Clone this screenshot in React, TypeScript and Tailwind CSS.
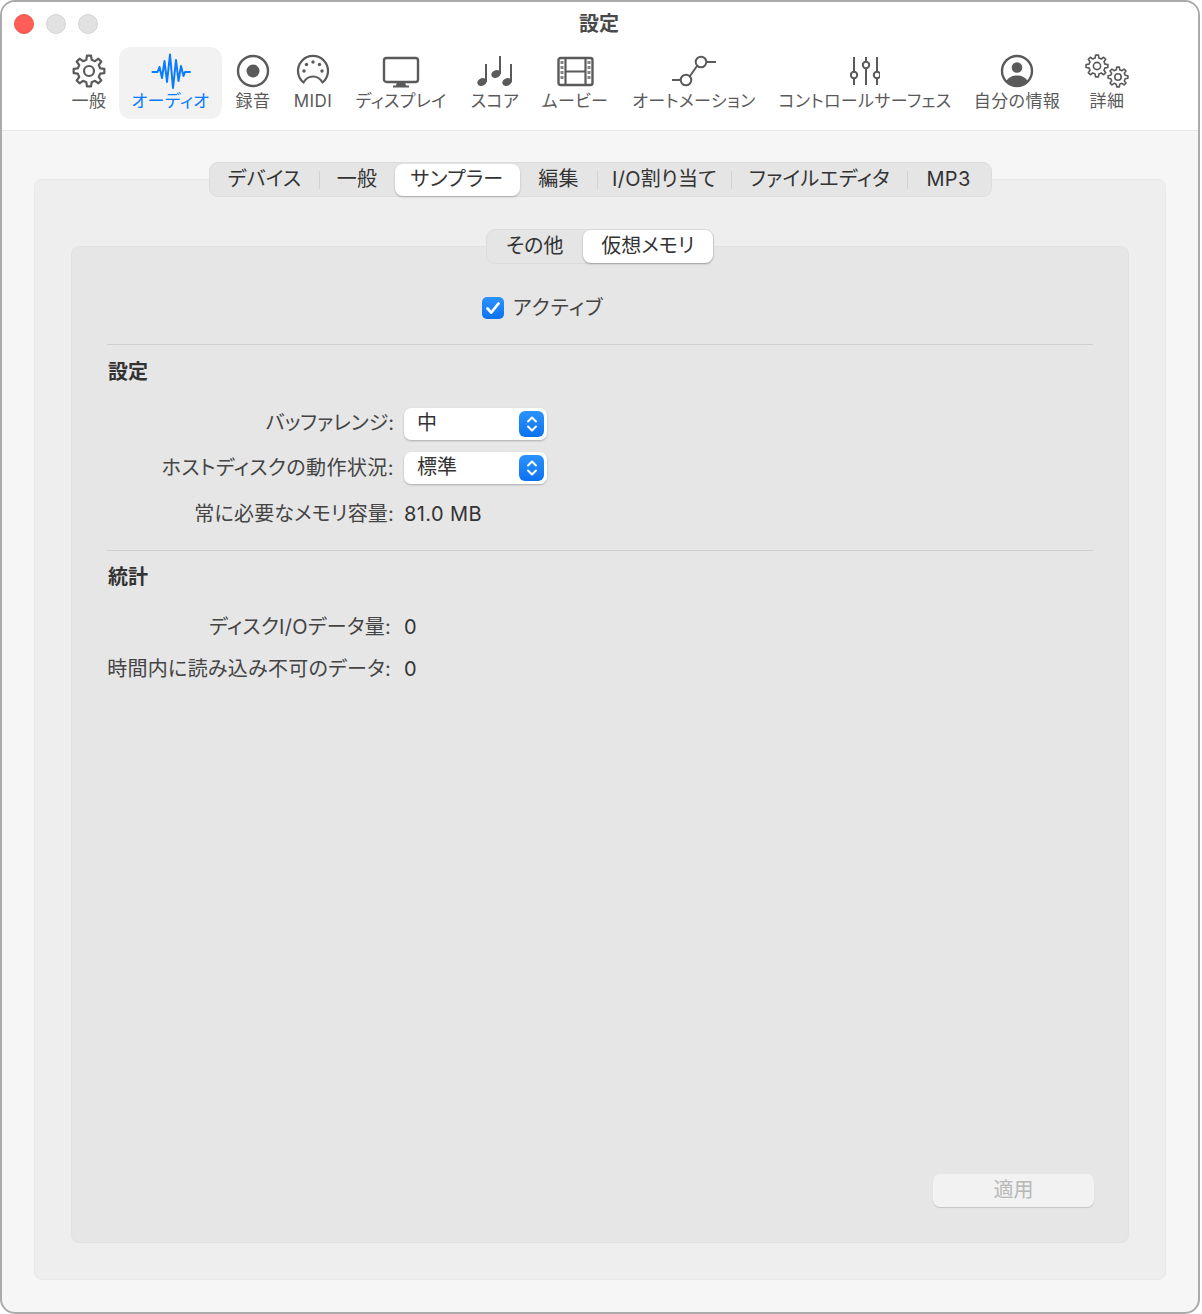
const gray = "#5a5a5a";

const items = [
  { label: "一般", w: "w-[60px]", icon: <GearIcon /> },
  { label: "オーディオ", w: "w-[103px]", icon: <WaveIcon />, active: true },
  { label: "録音", w: "w-[62px]", icon: <RecordIcon /> },
  { label: "MIDI", w: "w-[58px]", icon: <MidiIcon /> },
  { label: "ディスプレイ", w: "w-[118px]", icon: <DisplayIcon /> },
  { label: "スコア", w: "w-[70px]", icon: <NotesIcon /> },
  { label: "ムービー", w: "w-[90px]", icon: <FilmIcon /> },
  { label: "オートメーション", w: "w-[148px]", icon: <AutomationIcon /> },
  { label: "コントロールサーフェス", w: "w-[194px]", icon: <FadersIcon /> },
  { label: "自分の情報", w: "w-[110px]", icon: <PersonIcon /> },
  { label: "詳細", w: "w-[70px]", icon: <GearsIcon /> },
];

const tabs = [
  { label: "デバイス", w: "w-[110px]" },
  { label: "一般", w: "w-[75px]" },
  { label: "サンプラー", w: "w-[125px]", active: true },
  { label: "編集", w: "w-[78px]" },
  { label: "I/O割り当て", w: "w-[134px]" },
  { label: "ファイルエディタ", w: "w-[176px]" },
  { label: "MP3", w: "w-[82px]" },
];

// cog outline, also used for the two gears of 詳細
function gearPath(cx: number, cy: number, outer: number, inner: number, teeth = 8) {
  const step = (Math.PI * 2) / teeth;
  const pts: string[] = [];
  for (let i = 0; i < teeth; i++) {
    const a = i * step - Math.PI / 2;
    const at = (r: number, d: number) =>
      `${(cx + r * Math.cos(a + d)).toFixed(2)} ${(cy + r * Math.sin(a + d)).toFixed(2)}`;
    pts.push(at(inner, -step * 0.3), at(outer, -step * 0.17), at(outer, step * 0.17), at(inner, step * 0.3));
  }
  return "M" + pts.join("L") + "Z";
}

function GearIcon() {
  return (
    <svg width="36" height="36" viewBox="0 0 36 36" fill="none" stroke={gray} strokeWidth="2.2" strokeLinejoin="round">
      <path d={gearPath(18, 18, 15.5, 11.5)} />
      <circle cx="18" cy="18" r="5" />
    </svg>
  );
}

function WaveIcon() {
  return (
    <svg width="40" height="36" viewBox="0 0 40 36" fill="none" stroke="#0a7aff" strokeWidth="2" strokeLinejoin="round" strokeLinecap="round">
      <path d="M1.5 19H6.5L8.5 14L11 25L13.5 8L16 29L19 1.5L22 35L25 7L27.5 28L30 13L32.5 23L34 19H39" />
    </svg>
  );
}

function RecordIcon() {
  return (
    <svg width="36" height="36" viewBox="0 0 36 36" fill="none" stroke={gray}>
      <circle cx="18" cy="18" r="15" strokeWidth="2.4" />
      <circle cx="18" cy="18" r="6.5" fill={gray} stroke="none" />
    </svg>
  );
}

function MidiIcon() {
  return (
    <svg width="36" height="36" viewBox="0 0 36 36" fill="none" stroke={gray} strokeWidth="2.2" strokeLinejoin="round">
      <path d="M8.5 29.5A15 15 0 1 1 27.5 29.5C25 25 22 23.5 18 23.5C14 23.5 11 25 8.5 29.5Z" />
      <g fill={gray} stroke="none">
        <circle cx="9" cy="18" r="1.7" />
        <circle cx="11.5" cy="11.5" r="1.7" />
        <circle cx="18" cy="9" r="1.7" />
        <circle cx="24.5" cy="11.5" r="1.7" />
        <circle cx="27" cy="18" r="1.7" />
      </g>
    </svg>
  );
}

function DisplayIcon() {
  return (
    <svg width="38" height="36" viewBox="0 0 38 36" fill="none" stroke={gray}>
      <rect x="2" y="5" width="34" height="24" rx="2.5" strokeWidth="2.4" />
      <path d="M15 29H23L24 32.5H27V34.5H11V32.5H14Z" fill={gray} stroke="none" />
    </svg>
  );
}

function NotesIcon() {
  return (
    <svg width="39" height="36" viewBox="0 0 39 36" fill={gray} stroke={gray}>
      <g stroke="none">
        <ellipse cx="6" cy="29" rx="4.8" ry="3.8" transform="rotate(-20 6 29)" />
        <ellipse cx="20" cy="21" rx="4.8" ry="3.8" transform="rotate(-20 20 21)" />
        <ellipse cx="31" cy="29" rx="4.8" ry="3.8" transform="rotate(-20 31 29)" />
      </g>
      <path d="M10 29V11M24 21V3M35 29V11" strokeWidth="2" fill="none" />
    </svg>
  );
}

function FilmIcon() {
  return (
    <svg width="37" height="36" viewBox="0 0 37 36" fill="none" stroke={gray}>
      <rect x="1.5" y="5" width="34" height="27" rx="2" strokeWidth="2.4" />
      <path d="M8.5 5V32M28.5 5V32M8.5 18.5H28.5" strokeWidth="2.2" />
      <g fill={gray} stroke="none" opacity="0.75">
        <rect x="3.5" y="8" width="3" height="3" />
        <rect x="3.5" y="13" width="3" height="3" />
        <rect x="3.5" y="18" width="3" height="3" />
        <rect x="3.5" y="23" width="3" height="3" />
        <rect x="30.5" y="8" width="3" height="3" />
        <rect x="30.5" y="13" width="3" height="3" />
        <rect x="30.5" y="18" width="3" height="3" />
        <rect x="30.5" y="23" width="3" height="3" />
      </g>
    </svg>
  );
}

function AutomationIcon() {
  return (
    <svg width="46" height="36" viewBox="0 0 46 36" fill="none" stroke={gray} strokeWidth="2">
      <path d="M1 27H9.5M19 23L26 13M35.5 9H45" />
      <circle cx="15" cy="27" r="5.3" />
      <circle cx="30" cy="9" r="5.3" />
    </svg>
  );
}

function FadersIcon() {
  return (
    <svg width="30" height="36" viewBox="0 0 30 36" fill="none" stroke={gray} strokeWidth="2">
      <path d="M4 4V18.5M4 25.5V32M16 4V8.5M16 15.5V32M27 4V18.5M27 25.5V32" />
      <circle cx="4" cy="22" r="3.2" />
      <circle cx="16" cy="12" r="3.2" />
      <circle cx="27" cy="22" r="3.2" />
    </svg>
  );
}

function PersonIcon() {
  return (
    <svg width="36" height="36" viewBox="0 0 36 36" fill="none" stroke={gray}>
      <circle cx="18" cy="18" r="15" strokeWidth="2.4" />
      <circle cx="18" cy="14.5" r="5.3" fill={gray} stroke="none" />
      <path d="M7 28.5C10 23.5 14 22.5 18 22.5C22 22.5 26 23.5 29 28.5A15 15 0 0 1 7 28.5Z" fill={gray} stroke="none" />
    </svg>
  );
}

function GearsIcon() {
  return (
    <svg width="44" height="36" viewBox="0 0 44 36" fill="none" stroke={gray} strokeWidth="1.6" strokeLinejoin="round">
      <path d={gearPath(12, 13, 11, 8.2)} />
      <circle cx="12" cy="13" r="3.6" />
      <path d={gearPath(33, 24, 10, 7.4)} />
      <circle cx="33" cy="24" r="3.2" />
    </svg>
  );
}

function SelectBox({ value }: { value: string }) {
  return (
    <div className="w-[143px] h-[32px] rounded-[7px] bg-white shadow-[0_1px_2px_rgba(0,0,0,0.25)] flex items-center justify-between pl-[13px] pr-[3px] text-[20px] text-[#333]">
      <span className="-mt-[2px]">{value}</span>
      <span className="w-[25px] h-[26px] rounded-[6px] bg-gradient-to-b from-[#2b93ff] to-[#0a72f0] flex items-center justify-center">
        <svg width="14" height="20" viewBox="0 0 14 20" fill="none" stroke="#fff" strokeWidth="2" strokeLinecap="round" strokeLinejoin="round">
          <path d="M3 7.5L7 3.5L11 7.5M3 12.5L7 16.5L11 12.5" />
        </svg>
      </span>
    </div>
  );
}

function Row({ label, value, wide }: { label: string; value: string; wide?: boolean }) {
  return (
    <div className="flex items-center h-[28px] text-[20px] text-[#444]">
      <span className={wide ? "w-[287px] text-right whitespace-nowrap tracking-[0.2px]" : "w-[284px] text-right whitespace-nowrap tracking-[0.3px]"}>{label}</span>
      <span className={wide ? "ml-[10px] text-[#333] tracking-[0.4px]" : "ml-[13px] text-[#333]"}>{value}</span>
    </div>
  );
}

export default function App() {
  return (
    <div className="w-[1202px] h-[1314px] bg-white font-['Inter','Noto_Sans_CJK_JP',sans-serif] [font-feature-settings:'palt']">
      <div className="w-[1200px] h-full border-2 border-[#ababab] rounded-[15px] overflow-hidden bg-[#f6f6f6] flex flex-col">
        <header className="h-[129px] shrink-0 bg-white border-b border-[#e6e6e6]">
          <div className="h-[44px] relative flex items-center justify-center">
            <div className="absolute left-[12px] top-[12px] flex gap-[12px]">
              <span className="w-[20px] h-[20px] rounded-full bg-[#ff5f57] border border-[#e8544d]" />
              <span className="w-[20px] h-[20px] rounded-full bg-[#e2e2e2] border border-[#d2d2d2]" />
              <span className="w-[20px] h-[20px] rounded-full bg-[#e2e2e2] border border-[#d2d2d2]" />
            </div>
            <span className="-ml-[2px] text-[20px] font-bold text-[#4a4a4a]">設定</span>
          </div>
          <nav className="mt-px flex pl-[57px]">
            {items.map((item) => (
              <div
                key={item.label}
                className={`${item.w} h-[72px] rounded-[12px] pt-[6px] flex flex-col items-center ${item.active ? "bg-[#f2f2f2] text-[#0a7aff]" : "text-[#5a5a5a]"}`}
              >
                <div className="h-[36px] flex justify-center">{item.icon}</div>
                <span className="text-[17px] leading-[24px] tracking-[0.4px] whitespace-nowrap">{item.label}</span>
              </div>
            ))}
          </nav>
        </header>
        <main className="flex-1 flex flex-col px-[32px] pt-[31px] pb-[32px]">
          <div className="self-center relative z-10 -mb-[18px] h-[35px] w-[783px] flex items-center rounded-[9px] bg-[#e5e5e5] border border-[#dcdcdc] text-[20px] tracking-[0.3px] text-[#333]">
            {tabs.map((tab, i) => (
              <div key={tab.label} className="contents">
                {i > 0 && !tab.active && !tabs[i - 1].active && (
                  <span className="w-px h-[18px] -ml-px bg-[#d2d2d2]" />
                )}
                <div
                  className={`${tab.w} h-[32px] pb-[2px] flex items-center justify-center rounded-[8px] whitespace-nowrap ${tab.active ? "bg-white shadow-[0_1px_2px_rgba(0,0,0,0.25)]" : ""}`}
                >
                  {tab.label}
                </div>
              </div>
            ))}
          </div>
          <div className="flex-1 flex flex-col rounded-[8px] bg-[#eeeeee] border border-[#e8e8e8] px-[36px] pb-[36px] pt-[49px]">
            <div className="self-center relative z-10 -mb-[18px] h-[35px] w-[228px] flex items-center rounded-[9px] bg-[#e5e5e5] border border-[#dcdcdc] text-[20px] text-[#333]">
              <div className="w-[96px] pb-[2px] text-center">その他</div>
              <div className="w-[131px] h-[33px] pb-[2px] flex items-center justify-center rounded-[8px] bg-white shadow-[0_1px_2px_rgba(0,0,0,0.3)] whitespace-nowrap">仮想メモリ</div>
            </div>
            <section className="flex-1 flex flex-col rounded-[8px] bg-[#e6e6e6] border border-[#e1e1e1] px-[35px] pb-[35px]">
              <div className="mt-[50px] ml-[375px] flex items-center gap-[9px] h-[22px]">
                <span className="w-[22px] h-[22px] rounded-[5px] bg-gradient-to-b from-[#2b93ff] to-[#0a72f0] flex items-center justify-center">
                  <svg width="16" height="16" viewBox="0 0 16 16" fill="none" stroke="#fff" strokeWidth="2.8" strokeLinecap="round" strokeLinejoin="round">
                    <path d="M2.5 8.5L6.3 12.5L13.5 3.5" />
                  </svg>
                </span>
                <span className="text-[20px] tracking-[1px] text-[#444]">アクティブ</span>
              </div>
              <div className="mt-[25px] h-px bg-[#cfcfcf]" />
              <h2 className="mt-[13px] pl-[1px] h-[28px] leading-[28px] text-[20px] font-bold text-[#333]">設定</h2>
              <div className="mt-[22px] flex items-center text-[20px] text-[#444]">
                <span className="w-[287px] -mt-[2px] text-right">バッファレンジ:</span>
                <div className="ml-[10px]"><SelectBox value="中" /></div>
              </div>
              <div className="mt-[12px] flex items-center text-[20px] text-[#444]">
                <span className="w-[287px] -mt-[1px] text-right tracking-[0.45px]">ホストディスクの動作状況:</span>
                <div className="ml-[10px]"><SelectBox value="標準" /></div>
              </div>
              <div className="mt-[16px]"><Row wide label="常に必要なメモリ容量:" value="81.0 MB" /></div>
              <div className="mt-[22px] h-px bg-[#cfcfcf]" />
              <h2 className="mt-[12px] pl-[1px] h-[28px] leading-[28px] text-[20px] font-bold text-[#333]">統計</h2>
              <div className="mt-[22px]"><Row label="ディスクI/Oデータ量:" value="0" /></div>
              <div className="mt-[14px]"><Row label="時間内に読み込み不可のデータ:" value="0" /></div>
              <button className="mt-auto self-end w-[161px] h-[33px] -mr-[1px] pb-[2px] rounded-[7px] bg-[#f2f2f2] shadow-[0_1px_1px_rgba(0,0,0,0.15)] text-[20px] text-[#b8b8b8]">適用</button>
            </section>
          </div>
        </main>
      </div>
    </div>
  );
}
